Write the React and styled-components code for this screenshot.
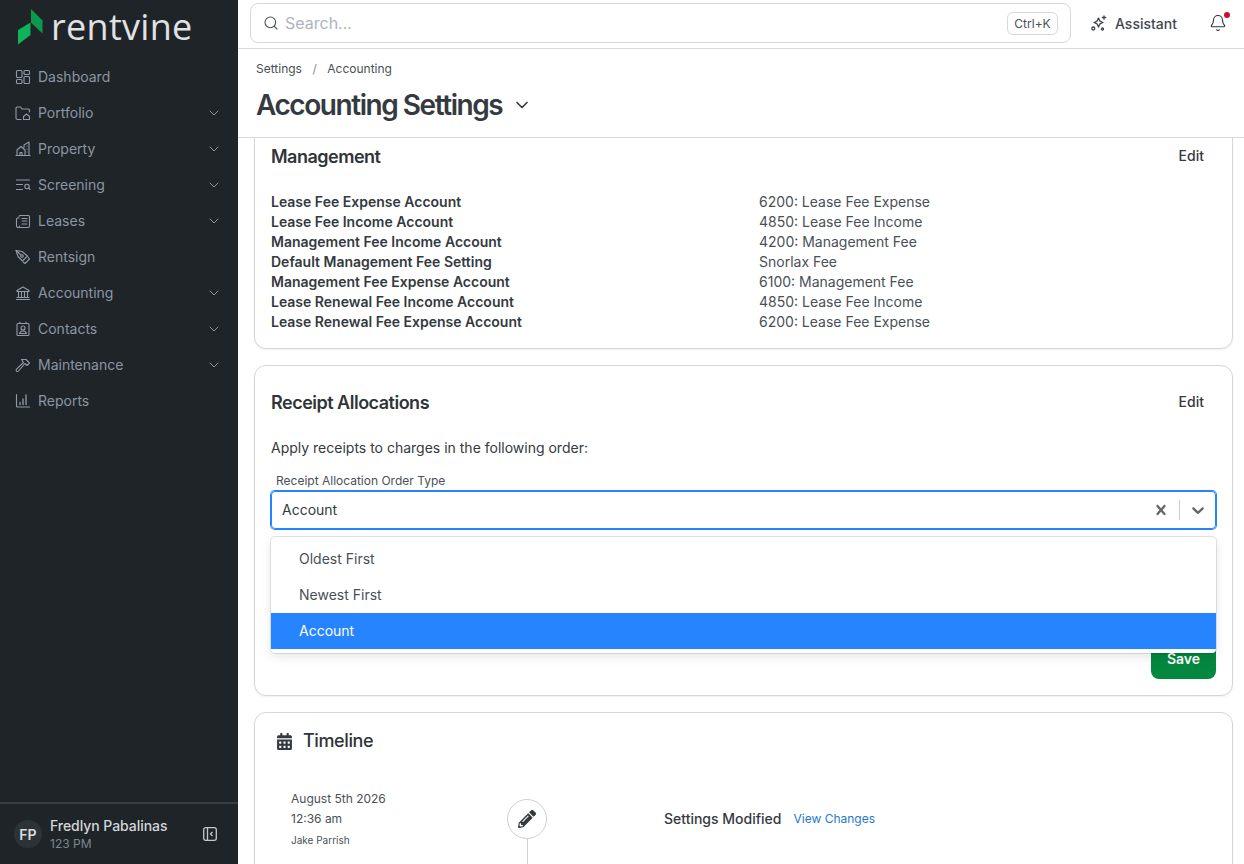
import React from 'react'
import styled, { createGlobalStyle } from 'styled-components'
import { Search, ChevronDown, Bell } from 'lucide-react'
import { FaCalendarAlt, FaPencilAlt } from 'react-icons/fa'

const GlobalStyle = createGlobalStyle`
  html, body {
    margin: 0;
    height: 100%;
    overflow: hidden;
    background: #fff;
    font-family: Inter, "Liberation Sans", sans-serif;
  }
  #root { height: 100%; }
  * { box-sizing: border-box; }
`;

const Shell = styled.div`
  display: flex;
  height: 864px;
  width: 1244px;
  overflow: hidden;
`;

const Sidebar = styled.aside`
  width: 238px;
  flex: none;
  background: #1f2428;
  display: flex;
  flex-direction: column;
`;

const LogoRow = styled.div`
  height: 59px;
  padding: 9px 0 0 18px;
  display: flex;
  align-items: flex-start;
  gap: 8px;
`;

const LogoText = styled.span`
  font-family: "Open Sans", sans-serif;
  font-size: 36px;
  font-weight: 400;
  line-height: 36px;
  color: #e0e2e4;
  letter-spacing: 0.3px;
`;

const Nav = styled.nav`
  display: flex;
  flex-direction: column;
  flex: 1;
`;

const NavItem = styled.div`
  height: 36px;
  display: flex;
  align-items: center;
  padding: 0 16px 0 15px;
  gap: 7px;
  font-size: 14px;
  color: #8a96a3;
  svg.main { flex: none; color: #929ca6; }
  span { flex: 1; padding-bottom: 2px; }
`;

const Footer = styled.div`
  height: 62px;
  border-top: 2px solid #383d41;
  display: flex;
  align-items: center;
  padding: 0 21px 0 14px;
  gap: 8px;
`;

const Avatar = styled.div`
  width: 28px;
  height: 28px;
  border-radius: 50%;
  background: #2c3337;
  color: #d8dadc;
  font-size: 14px;
  font-weight: 600;
  display: flex;
  align-items: center;
  justify-content: center;
`;

const FooterText = styled.div`
  flex: 1;
  display: flex;
  flex-direction: column;
`;

const UserName = styled.div`
  font-size: 14px;
  font-weight: 500;
  line-height: 18px;
  letter-spacing: -0.05px;
  color: #d3d6d9;
`;

const UserSub = styled.div`
  font-size: 12px;
  line-height: 17px;
  color: #7c8790;
`;

const Main = styled.main`
  flex: 1;
  min-width: 0;
  display: flex;
  flex-direction: column;
`;

const TopBar = styled.header`
  height: 49px;
  flex: none;
  border-bottom: 1px solid #d9d9d9;
  display: flex;
  align-items: flex-start;
  padding: 3px 0 0 12px;
`;

const SearchBox = styled.div`
  width: 821px;
  height: 40px;
  border: 1px solid #d6d8da;
  border-radius: 8px;
  display: flex;
  align-items: center;
  padding: 0 12px;
  gap: 6px;
  color: #495057;
`;

const Placeholder = styled.span`
  flex: 1;
  font-size: 16px;
  color: #adb5bd;
`;

const Kbd = styled.span`
  height: 23px;
  width: 51px;
  border: 1px solid #d6d8da;
  border-radius: 6px;
  font-size: 12px;
  color: #495057;
  display: flex;
  align-items: center;
  justify-content: center;
`;

const AssistantBtn = styled.div`
  margin: 11px 0 0 20px;
  display: flex;
  align-items: center;
  gap: 8px;
  font-size: 14px;
  font-weight: 500;
  color: #41474d;
  height: 18px;
`;

const BellWrap = styled.div`
  position: relative;
  margin: 11px 0 0 32px;
  height: 18px;
  color: #2f3438;
`;

const RedDot = styled.i`
  position: absolute;
  top: -2px;
  right: -3px;
  width: 6px;
  height: 6px;
  border-radius: 50%;
  background: #c8102e;
`;

const PageHead = styled.div`
  height: 89px;
  flex: none;
  border-bottom: 1px solid #d9d9d9;
  padding: 12px 18px 0;
`;

const Crumbs = styled.div`
  display: flex;
  gap: 10.5px;
  font-size: 12px;
  line-height: 16px;
  color: #495057;
`;

const CrumbSlash = styled.span`
  color: #868e96;
`;

const TitleRow = styled.div`
  display: flex;
  align-items: center;
  gap: 10px;
  margin-top: 11px;
  color: #343a40;
`;

const PageTitle = styled.h1`
  margin: 0;
  font-size: 28px;
  font-weight: 600;
  line-height: 34px;
  letter-spacing: -1.45px;
  color: #343a40;
`;

const ScrollArea = styled.div`
  flex: 1;
  min-height: 0;
  overflow: hidden;
`;

const CardList = styled.div`
  margin: -19px 11px 0 16px;
  display: flex;
  flex-direction: column;
  gap: 16px;
`;

const Card = styled.section`
  position: relative;
  border: 1px solid #d6d6d6;
  border-radius: 12px;
  padding: 16px;
  box-shadow: 0 1px 2px rgba(0, 0, 0, 0.06);
  background: #fff;
`;

const CardHead = styled.div`
  display: flex;
  align-items: center;
  justify-content: space-between;
  height: 40px;
`;

const CardTitle = styled.h2`
  margin: 0;
  padding-top: 1px;
  font-size: 18px;
  font-weight: 600;
  line-height: 24px;
  letter-spacing: -0.5px;
  color: #2f3438;
`;

const EditBtn = styled.span`
  font-size: 14px;
  font-weight: 500;
  color: #343a40;
  padding: 0 12px 2px;
`;

const InfoGrid = styled.dl`
  margin: 16px 0 0;
  display: grid;
  grid-template-columns: 488px 1fr;
  font-size: 14px;
  line-height: 20px;
  dt { font-weight: 600; color: #343a40; }
  dd { margin: 0; color: #495057; }
`;

const Lead = styled.p`
  margin: 16px 0 0;
  font-size: 14px;
  line-height: 20px;
  color: #343a40;
`;

const FieldLabel = styled.label`
  display: block;
  margin: 15px 0 2px 5px;
  font-size: 12px;
  line-height: 16px;
  color: #495057;
`;

const SelectWrap = styled.div`
  position: relative;
`;

const SelectBox = styled.div`
  height: 38px;
  border: 1px solid #2684ff;
  box-shadow: 0 0 0 1px #2684ff;
  border-radius: 4px;
  display: flex;
  align-items: center;
  padding: 0 7px 0 10px;
  font-size: 14px;
  color: #343a40;
`;

const SelectValue = styled.span`
  flex: 1;
  padding-bottom: 2px;
`;

const SelectIcon = styled.svg`
  width: 20px;
  height: 20px;
  fill: #666;
`;

const Divider = styled.i`
  width: 1px;
  height: 20px;
  background: #ccc;
  margin: 0 8px;
`;

const Menu = styled.div`
  position: absolute;
  z-index: 2;
  top: 46px;
  left: 0;
  right: 0;
  padding: 4px 0;
  background: #fff;
  border-radius: 4px;
  box-shadow: 0 0 0 1px rgba(0, 0, 0, 0.1), 0 4px 11px rgba(0, 0, 0, 0.1);
`;

const MenuItem = styled.div`
  height: 36px;
  display: flex;
  align-items: center;
  padding: 0 0 2px 28px;
  font-size: 14px;
  color: ${(p) => (p.$active ? '#fff' : '#495057')};
  background: ${(p) => (p.$active ? '#2684ff' : 'transparent')};
`;

const SaveRow = styled.div`
  display: flex;
  justify-content: flex-end;
  margin-top: 110px;
`;

const SaveBtn = styled.button`
  width: 65px;
  height: 40px;
  border: none;
  border-radius: 8px;
  padding: 0 0 2px;
  background: #04883f;
  color: #fff;
  font-family: inherit;
  font-size: 14px;
  font-weight: 600;
`;

const TimelineHead = styled.div`
  display: flex;
  align-items: center;
  gap: 10px;
  height: 24px;
  margin: 0 0 0 5px;
  color: #343a40;
`;

const TimelineTitle = styled.h2`
  margin: 0;
  font-size: 18px;
  font-weight: 500;
  line-height: 24px;
  letter-spacing: -0.4px;
  color: #2f3438;
`;

const TimelineRow = styled.div`
  display: grid;
  grid-template-columns: 216px 40px 1fr;
  margin: 46px 0 0 20px;
  height: 120px;
`;

const DateCol = styled.div`
  font-size: 12px;
  line-height: 20px;
  color: #495057;
  margin-top: -10px;
`;

const ByLine = styled.div`
  font-size: 10px;
  line-height: 22px;
  color: #495057;
`;

const Marker = styled.div`
  display: flex;
  flex-direction: column;
  align-items: center;
`;

const MarkerCircle = styled.div`
  width: 40px;
  height: 40px;
  flex: none;
  border: 1px solid #d0d0d0;
  border-radius: 50%;
  display: flex;
  align-items: center;
  justify-content: center;
  color: #343a40;
`;

const MarkerLine = styled.i`
  width: 1px;
  flex: 1;
  background: #d0d0d0;
`;

const EventCol = styled.div`
  display: flex;
  align-items: center;
  gap: 12px;
  height: 40px;
  padding: 0 0 2px 117px;
`;

const EventName = styled.span`
  font-size: 14px;
  font-weight: 500;
  color: #343a40;
`;

const EventLink = styled.span`
  font-size: 12px;
  color: #2679c9;
`;

const Ico = ({ children }) => (
  <svg className="main" width="16" height="16" viewBox="0 0 16 16" fill="none" stroke="currentColor" strokeWidth="1.1" strokeLinecap="round" strokeLinejoin="round">
    {children}
  </svg>
)

const navItems = [
  ['Dashboard', false, <><rect x="1.5" y="1.5" width="5.5" height="7" rx="1" /><rect x="9" y="1.5" width="5.5" height="4" rx="1" /><rect x="1.5" y="10.500" width="5.5" height="4" rx="1" /><rect x="9" y="7.500" width="5.5" height="7" rx="1" /></>],
  ['Portfolio', true, <><path d="M6 14.500H2.500A1.500 1.500 0 0 1 1 13V3a1 1 0 0 1 1-1h3.500l1.500 2h6.500A1 1 0 0 1 14.500 5v2" /><path d="M8.500 14.500v-3l3-2.500 3 2.500v3z" /></>],
  ['Property', true, <><path d="M1 14.500h14" /><path d="M2 14.500V9l4-3.500L10 9v5.500" /><path d="M9 6.500V4L14 1v13.500" /><path d="M5 14.500v-3h2v3" /><path d="M12 5h.01M12 8h.01M12 11h.01" /></>],
  ['Screening', true, <><path d="M1.500 3h13M1.500 7.500h6M1.500 12.500h6" /><circle cx="12" cy="9.500" r="2.200" /><path d="M13.700 11.200L15 12.500" /></>],
  ['Leases', true, <><path d="M4 3.500a1 1 0 0 1 1-1h8.500a1 1 0 0 1 1 1V13a1.500 1.500 0 0 1-1.500 1.500H3" /><path d="M4 5H2.500a1 1 0 0 0-1 1v7a1.500 1.500 0 0 0 3 0" /><path d="M7 5.500h5M7 8h5M7 11h5" /></>],
  ['Rentsign', false, <><path d="M1 1.500L7 2.500 12.500 7 7.500 12 3 7.500z" /><circle cx="7" cy="7" r="1.300" /><path d="M1 1.500L6 6" /><path d="M13 8l1.500 2-4.500 4.500-2-1.500" /></>],
  ['Accounting', true, <><path d="M2 5.500L8 2l6 3.500v1H2z" /><path d="M3.500 6.500v5.500M6.500 6.500v5.500M9.500 6.500v5.500M12.500 6.500v5.500" /><path d="M2 12.500h12M1.500 14.500h13" /></>],
  ['Contacts', true, <><rect x="2" y="2.500" width="12" height="12" rx="1" /><path d="M5 1v1.500M11 1v1.500" /><circle cx="8" cy="7" r="2" /><path d="M4.500 12.500c.5-2 2-2.500 3.500-2.500s3 .5 3.500 2.500z" /></>],
  ['Maintenance', true, <><path d="M6.500 2.500H11L14.500 6 12 8.500 10 6.500 3.500 14a1.300 1.300 0 0 1-2-1.800L8.500 5.500z" /></>],
  ['Reports', false, <><path d="M1.500 1.500V13a1 1 0 0 0 1 1h12" /><path d="M5 11.500V9.500M8 11.500V6M11 11.500V2" strokeWidth="1.300" /></>],
]

const rows = [
  ['Lease Fee Expense Account', '6200: Lease Fee Expense'],
  ['Lease Fee Income Account', '4850: Lease Fee Income'],
  ['Management Fee Income Account', '4200: Management Fee'],
  ['Default Management Fee Setting', 'Snorlax Fee'],
  ['Management Fee Expense Account', '6100: Management Fee'],
  ['Lease Renewal Fee Income Account', '4850: Lease Fee Income'],
  ['Lease Renewal Fee Expense Account', '6200: Lease Fee Expense'],
]

function App() {
  return (
    <Shell>
      <GlobalStyle />
      <Sidebar>
        <LogoRow>
          <svg width="25" height="36" viewBox="0 0 25 36">
            <path d="M13 0L24.500 11.500V24.500L13 13.500z" fill="#0b9a4c" />
            <path d="M0 21L12.500 13.500V26L0 35.500z" fill="#0fb358" />
          </svg>
          <LogoText>rentvine</LogoText>
        </LogoRow>
        <Nav>
          {navItems.map(([label, more, icon]) => (
            <NavItem key={label}>
              <Ico>{icon}</Ico>
              <span>{label}</span>
              {more && <ChevronDown size={16} strokeWidth={1.5} />}
            </NavItem>
          ))}
        </Nav>
        <Footer>
          <Avatar>FP</Avatar>
          <FooterText>
            <UserName>Fredlyn Pabalinas</UserName>
            <UserSub>123 PM</UserSub>
          </FooterText>
          <svg width="14" height="14" viewBox="0 0 14 14" fill="none" stroke="#c5c8cb" strokeWidth="1.3">
            <rect x="0.700" y="0.700" width="12.600" height="12.600" rx="2" />
            <path d="M4.500 1v12" />
            <path d="M9.500 5L7.500 7l2 2" />
          </svg>
        </Footer>
      </Sidebar>
      <Main>
        <TopBar>
          <SearchBox>
            <Search size={16} strokeWidth={1.6} />
            <Placeholder>Search...</Placeholder>
            <Kbd>Ctrl+K</Kbd>
          </SearchBox>
          <AssistantBtn>
            <svg width="16" height="16" viewBox="0 0 16 16" fill="none" stroke="currentColor" strokeWidth="1.300" strokeLinejoin="round" strokeLinecap="round">
              <path d="M7.500 3l1.400 3.100 3.100 1.400-3.100 1.400-1.400 3.100-1.400-3.100L3 7.500l3.100-1.400z" />
              <path d="M13 .8v3.400M11.300 2.500h3.400" />
              <circle cx="2.300" cy="13.500" r="1.500" />
              <circle cx="11.500" cy="14" r="1" />
            </svg>
            Assistant
          </AssistantBtn>
          <BellWrap>
            <Bell size={18} strokeWidth={1.5} />
            <RedDot />
          </BellWrap>
        </TopBar>
        <PageHead>
          <Crumbs>
            <span>Settings</span>
            <CrumbSlash>/</CrumbSlash>
            <span>Accounting</span>
          </Crumbs>
          <TitleRow>
            <PageTitle>Accounting Settings</PageTitle>
            <ChevronDown size={20} strokeWidth={2} />
          </TitleRow>
        </PageHead>
        <ScrollArea>
          <CardList>
            <Card>
              <CardHead>
                <CardTitle>Management</CardTitle>
                <EditBtn>Edit</EditBtn>
              </CardHead>
              <InfoGrid>
                {rows.map(([k, v]) => (
                  <React.Fragment key={k}>
                    <dt>{k}</dt>
                    <dd>{v}</dd>
                  </React.Fragment>
                ))}
              </InfoGrid>
            </Card>
            <Card>
              <CardHead>
                <CardTitle>Receipt Allocations</CardTitle>
                <EditBtn>Edit</EditBtn>
              </CardHead>
              <Lead>Apply receipts to charges in the following order:</Lead>
              <FieldLabel>Receipt Allocation Order Type</FieldLabel>
              <SelectWrap>
                <SelectBox>
                  <SelectValue>Account</SelectValue>
                  <SelectIcon viewBox="0 0 20 20">
                    <path d="M14.348 14.849c-0.469 0.469-1.229 0.469-1.697 0l-2.651-3.030-2.651 3.029c-0.469 0.469-1.229 0.469-1.697 0-0.469-0.469-0.469-1.229 0-1.697l2.758-3.150-2.759-3.152c-0.469-0.469-0.469-1.228 0-1.697s1.228-0.469 1.697 0l2.652 3.031 2.651-3.031c0.469-0.469 1.228-0.469 1.697 0s0.469 1.229 0 1.697l-2.758 3.152 2.758 3.150c0.469 0.469 0.469 1.229 0 1.698z" />
                  </SelectIcon>
                  <Divider />
                  <SelectIcon viewBox="0 0 20 20">
                    <path d="M4.516 7.548c0.436-0.446 1.043-0.481 1.576 0l3.908 3.747 3.908-3.747c0.533-0.481 1.141-0.446 1.574 0 0.436 0.445 0.408 1.197 0 1.615-0.406 0.418-4.695 4.502-4.695 4.502-0.217 0.223-0.502 0.335-0.787 0.335s-0.570-0.112-0.789-0.335c0 0-4.287-4.084-4.695-4.502s-0.436-1.170 0-1.615z" />
                  </SelectIcon>
                </SelectBox>
                <Menu>
                  <MenuItem>Oldest First</MenuItem>
                  <MenuItem>Newest First</MenuItem>
                  <MenuItem $active>Account</MenuItem>
                </Menu>
              </SelectWrap>
              <SaveRow>
                <SaveBtn>Save</SaveBtn>
              </SaveRow>
            </Card>
            <Card>
              <TimelineHead>
                <FaCalendarAlt size={17} />
                <TimelineTitle>Timeline</TimelineTitle>
              </TimelineHead>
              <TimelineRow>
                <DateCol>
                  August 5th 2026
                  <br />
                  12:36 am
                  <ByLine>Jake Parrish</ByLine>
                </DateCol>
                <Marker>
                  <MarkerCircle>
                    <FaPencilAlt size={18} />
                  </MarkerCircle>
                  <MarkerLine />
                </Marker>
                <EventCol>
                  <EventName>Settings Modified</EventName>
                  <EventLink>View Changes</EventLink>
                </EventCol>
              </TimelineRow>
            </Card>
          </CardList>
        </ScrollArea>
      </Main>
    </Shell>
  )
}

export default App
